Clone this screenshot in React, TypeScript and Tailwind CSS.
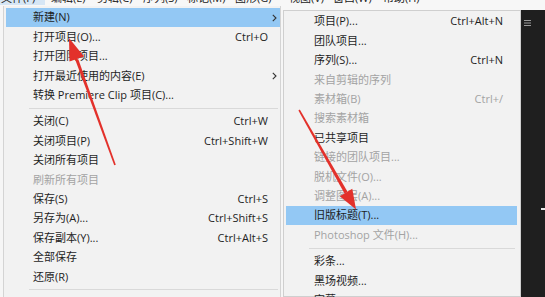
import React from "react";

type Item =
  | { sep: true }
  | { sep?: false; label: string; shortcut?: string; disabled?: boolean; sub?: boolean; active?: boolean };

const leftItems: Item[] = [
  { label: "新建(N)", sub: true, active: true },
  { label: "打开项目(O)...", shortcut: "Ctrl+O" },
  { label: "打开团队项目..." },
  { label: "打开最近使用的内容(E)", sub: true },
  { label: "转换 Premiere Clip 项目(C)..." },
  { sep: true },
  { label: "关闭(C)", shortcut: "Ctrl+W" },
  { label: "关闭项目(P)", shortcut: "Ctrl+Shift+W" },
  { label: "关闭所有项目" },
  { label: "刷新所有项目", disabled: true },
  { label: "保存(S)", shortcut: "Ctrl+S" },
  { label: "另存为(A)...", shortcut: "Ctrl+Shift+S" },
  { label: "保存副本(Y)...", shortcut: "Ctrl+Alt+S" },
  { label: "全部保存" },
  { label: "还原(R)" },
  { sep: true },
];

const subItems: Item[] = [
  { label: "项目(P)...", shortcut: "Ctrl+Alt+N" },
  { label: "团队项目..." },
  { label: "序列(S)...", shortcut: "Ctrl+N" },
  { label: "来自剪辑的序列", disabled: true },
  { label: "素材箱(B)", shortcut: "Ctrl+/", disabled: true },
  { label: "搜索素材箱", disabled: true },
  { label: "已共享项目" },
  { label: "链接的团队项目...", disabled: true },
  { label: "脱机文件(O)...", disabled: true },
  { label: "调整图层(A)...", disabled: true },
  { label: "旧版标题(T)...", active: true },
  { label: "Photoshop 文件(H)...", disabled: true },
  { sep: true },
  { label: "彩条..." },
  { label: "黑场视频..." },
  { label: "字幕..." },
];

const menuBar = [
  { t: "文件(F)", w: "w-[45px]", active: true },
  { t: "编辑(E)", w: "w-[46px]" },
  { t: "剪辑(C)", w: "w-[46px]" },
  { t: "序列(S)", w: "w-[44px]" },
  { t: "标记(M)", w: "w-[48px]" },
  { t: "图形(G)", w: "w-[54px]" },
  { t: "视图(V)", w: "w-[44px]" },
  { t: "窗口(W)", w: "w-[50px]" },
  { t: "帮助(H)", w: "w-[46px]" },
];

function Chevron() {
  return (
    <svg width="5" height="8" viewBox="0 0 5 8" className="shrink-0">
      <path d="M0.8 0.8 L4 4 L0.8 7.2" fill="none" stroke="#333" strokeWidth="1.1" />
    </svg>
  );
}

function MenuRows({ items, padL, shortcutRight, withArrowCol }: { items: Item[]; padL: string; shortcutRight: string; withArrowCol: boolean }) {
  return (
    <>
      {items.map((it, i) =>
        it.sep ? (
          <div key={i} className="h-[7px] flex items-center pl-[25px] pr-[2px]">
            <div className="h-px w-full bg-[#d9d9d9]" />
          </div>
        ) : (
          <div
            key={i}
            className={`h-[19.4px] flex items-center ml-[2px] ${padL} ${it.active ? "bg-[#93c8f4]" : ""} ${
              it.disabled ? "text-[#a3a3a3]" : "text-[#1e1e1e]"
            }`}
          >
            <span className="flex-1 whitespace-nowrap">{it.label}</span>
            <span className={`whitespace-nowrap ${shortcutRight}`}>{it.shortcut ?? ""}</span>
            {withArrowCol && <span className="w-[12px] flex justify-center">{it.sub ? <Chevron /> : null}</span>}
          </div>
        )
      )}
    </>
  );
}

export default function App() {
  return (
    <div
      className="relative w-[545px] h-[297px] overflow-hidden bg-[#f6f6f6] text-[11px]"
      style={{ fontFamily: '"Open Sans", "Noto Sans CJK SC", sans-serif' }}
    >
      {/* menu bar */}
      <div className="h-[10px] overflow-hidden bg-[#f7f7f7]">
        <div className="flex -mt-[9px] h-[14px] leading-[14px] text-[#222]">
          {menuBar.map((m, i) => (
            <div key={i} className={`${m.w} shrink-0 ${m.active ? "bg-[#d6e6f5]" : ""}`}>
              <span className={i === 0 ? "pl-[1px]" : "pl-[6px]"}>{m.t}</span>
            </div>
          ))}
        </div>
      </div>
      {/* app body */}
      <div className="flex h-[287px]">
        <div className="flex-1 bg-[#f6f6f6]" />
        <div className="w-[24px] bg-[#1f1f1f] pt-[10px] pl-[3px] flex flex-col">
          <svg width="7" height="6" viewBox="0 0 7 6">
            <rect x="0" y="0" width="7" height="1" fill="#9a9a9a" />
            <rect x="0" y="2.5" width="7" height="1" fill="#9a9a9a" />
            <rect x="0" y="5" width="7" height="1" fill="#9a9a9a" />
          </svg>
          <div className="mt-[182px] ml-[17px] w-[4px] h-[2px] bg-[#e8e8e8]" />
        </div>
      </div>

      {/* left menu */}
      <div className="absolute left-[3px] top-[6px] w-[278px] bottom-0 bg-[#f2f2f2] border-l border-r border-[#d4d4d4] pt-[2px]">
        <MenuRows items={leftItems} padL="pl-[27px]" shortcutRight="" withArrowCol />
      </div>

      {/* submenu */}
      <div className="absolute left-[283px] top-[10px] w-[238px] bottom-0 bg-[#f2f2f2] border border-[#cfcfcf] pt-[1px] pr-[3px]">
        <MenuRows items={subItems} padL="pl-[28px]" shortcutRight="pr-[14px]" withArrowCol={false} />
      </div>

      {/* red annotation arrows */}
      <svg className="absolute inset-0 pointer-events-none" width="545" height="297" viewBox="0 0 545 297">
        <polygon points="114.2,165.3 115.8,164.7 78.4,59.4 74.6,58.0" fill="#e3312b" />
        <polygon points="69,38 84,56.5 69.5,61.5" fill="#e3312b" />
        <polygon points="298.4,110.5 299.8,109.6 347.5,191.8 344.5,193.5" fill="#e3312b" />
        <polygon points="356,209.5 339.8,196.2 352.3,188.8" fill="#e3312b" />
      </svg>
    </div>
  );
}
